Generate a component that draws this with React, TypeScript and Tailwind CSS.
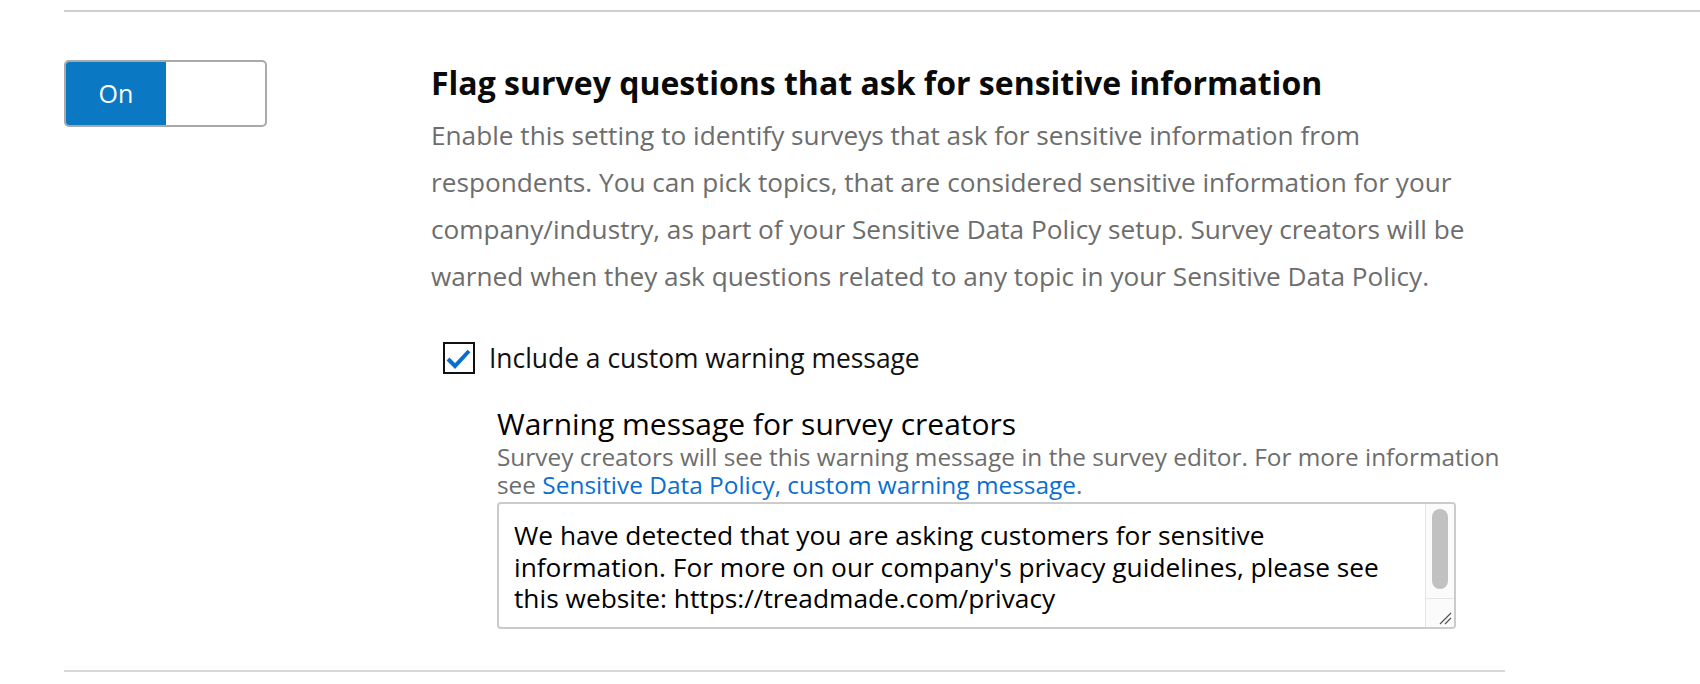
import React from "react";

const font = { fontFamily: "'Open Sans', Roboto, 'Liberation Sans', sans-serif" };

function Toggle() {
  return (
    <div className="flex h-[67px] w-[203px] shrink-0 overflow-hidden rounded-[5px] border-2 border-[#a9a9a9] bg-white">
      <div className="flex w-[100px] items-center justify-center bg-[#0a78c2] text-[25px] text-white">
        On
      </div>
      <div className="flex-1" />
    </div>
  );
}

function Checkbox() {
  return (
    <div className="flex h-[32px] w-[32px] shrink-0 items-center justify-center border-2 border-[#111] bg-white">
      <svg width="28" height="28" viewBox="0 0 28 28">
        <polyline
          points="3,15 10,22 24,7"
          fill="none"
          stroke="#0a6ed1"
          strokeWidth="4"
          strokeLinejoin="miter"
        />
      </svg>
    </div>
  );
}

function FakeTextarea() {
  return (
    <div className="mt-[3px] flex h-[127px] w-[959px] overflow-hidden rounded-[4px] border-2 border-[#cbcbcb] bg-white">
      <div className="flex-1 pl-[15px] pt-[16px] text-[26.3px] leading-[31.5px] text-black">
        <div className="whitespace-nowrap">We have detected that you are asking customers for sensitive</div>
        <div className="whitespace-nowrap">information. For more on our company's privacy guidelines, please see</div>
        <div className="whitespace-nowrap">this website: https://treadmade.com/privacy</div>
      </div>
      <div className="flex w-[29px] flex-col border-l border-[#e4e4e4] bg-[#fbfbfb]">
        <div className="flex h-[94px] justify-center pt-[5px]">
          <div className="h-[80px] w-[16px] rounded-full bg-[#c1c1c1]" />
        </div>
        <div className="relative flex-1 border-t border-[#e4e4e4]">
          <svg className="absolute bottom-[2px] right-[2px]" width="14" height="14" viewBox="0 0 14 14">
            <line x1="2" y1="13" x2="13" y2="2" stroke="#555" strokeWidth="1.2" />
            <line x1="7" y1="13" x2="13" y2="7" stroke="#555" strokeWidth="1.2" />
          </svg>
        </div>
      </div>
    </div>
  );
}

export default function App() {
  return (
    <div className="h-[684px] w-full overflow-hidden bg-white" style={font}>
      <div className="pl-[64px] pt-[10px]">
        <div className="border-t-2 border-[#cfcfcf]" />
        <div className="mt-[48px] flex">
          <Toggle />
          <div className="ml-[164px] flex flex-col">
            <h2 className="mt-[5px] whitespace-nowrap text-[32px] font-bold leading-[36px] text-[#0a0a0a]">
              Flag survey questions that ask for sensitive information
            </h2>
            <div className="mt-[11px] text-[26.2px] leading-[47px] text-[#6d6d6d]">
              <div className="whitespace-nowrap">Enable this setting to identify surveys that ask for sensitive information from</div>
              <div className="whitespace-nowrap">respondents. You can pick topics, that are considered sensitive information for your</div>
              <div className="whitespace-nowrap">company/industry, as part of your Sensitive Data Policy setup. Survey creators will be</div>
              <div className="whitespace-nowrap">warned when they ask questions related to any topic in your Sensitive Data Policy.</div>
            </div>
            <div className="mt-[42px] flex items-center pl-[12px]">
              <Checkbox />
              <span className="ml-[14px] whitespace-nowrap text-[26.4px] leading-[32px] text-[#111]">
                Include a custom warning message
              </span>
            </div>
            <div className="ml-[66px] flex flex-col">
              <div className="mt-[33px] whitespace-nowrap text-[30px] leading-[34px] text-black">
                Warning message for survey creators
              </div>
              <div className="mt-[2px] text-[24.4px] leading-[28px] text-[#6d6d6d]">
                <div className="whitespace-nowrap">
                  Survey creators will see this warning message in the survey editor. For more information
                </div>
                <div className="whitespace-nowrap">
                  see <span className="text-[#0a6ed1]">Sensitive Data Policy, custom warning message</span>.
                </div>
              </div>
              <FakeTextarea />
            </div>
          </div>
        </div>
        <div className="mt-[41px] w-[1441px] border-t-2 border-[#d8d8d8]" />
      </div>
    </div>
  );
}
